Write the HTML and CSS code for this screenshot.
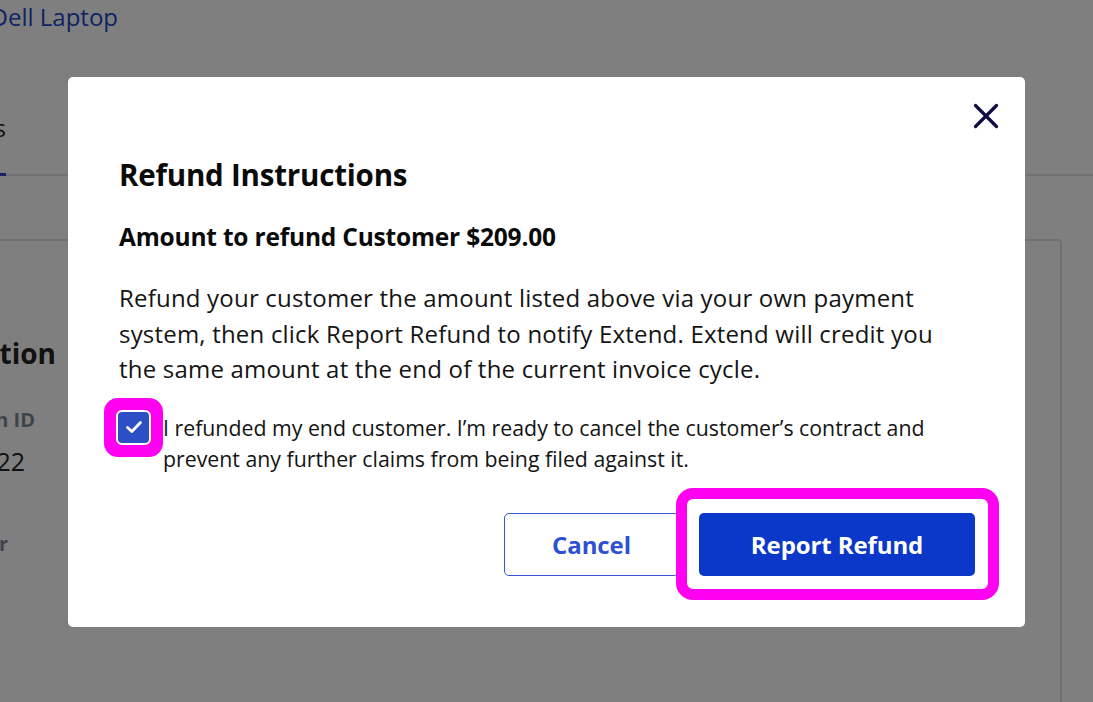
FILE: index.html
```html
<!DOCTYPE html>
<html>
<head>
<meta charset="utf-8">
<link rel="stylesheet" href="styles.css">
</head>
<body>
<div class="page">
  <div class="product"><span>Dell Laptop</span></div>
  <div class="tabs">
    <div class="tab active"><span>Details</span></div>
  </div>
  <div class="card">
    <div class="card-title"><span>Contract Information</span></div>
    <div class="field-label"><span>Transaction ID</span></div>
    <div class="field-value"><span>1022</span></div>
    <div class="field-label second"><span>Customer</span></div>
  </div>
</div>

<div class="overlay">
  <div class="modal">
    <div class="modal-top">
      <button class="close" aria-label="Close">
        <svg width="26" height="26" viewBox="0 0 26 26"><path d="M2.5 2.5 L23.5 23.5 M23.5 2.5 L2.5 23.5" stroke="#0c0a3e" stroke-width="3.2" stroke-linecap="round"/></svg>
      </button>
    </div>
    <h1 class="title">Refund Instructions</h1>
    <h2 class="amount">Amount to refund Customer $209.00</h2>
    <p class="body">Refund your customer the amount listed above via your own payment system, then click Report Refund to notify Extend. Extend will credit you the same amount at the end of the current invoice cycle.</p>
    <label class="check-row">
      <span class="highlight-check">
        <span class="checkbox">
          <svg width="18" height="14" viewBox="0 0 18 14"><path d="M2.5 7.5 L6.8 11.5 L15.5 2.5" fill="none" stroke="#fff" stroke-width="2.8" stroke-linecap="round" stroke-linejoin="round"/></svg>
        </span>
      </span>
      <span class="check-text">I refunded my end customer. I’m ready to cancel the customer’s contract and prevent any further claims from being filed against it.</span>
    </label>
    <div class="actions">
      <button class="btn cancel">Cancel</button>
      <div class="primary-wrap">
        <button class="btn primary">Report Refund</button>
        <span class="highlight-ring"></span>
      </div>
    </div>
  </div>
</div>
</body>
</html>
```
FILE: styles.css
```css
* { box-sizing: border-box; }
html, body { margin: 0; padding: 0; }
body {
  width: 1093px;
  height: 702px;
  overflow: hidden;
  background: #fff;
  font-family: "Open Sans", "Noto Sans", sans-serif;
  position: relative;
}
.page {
  height: 702px;
  overflow: hidden;
}
.product, .tab, .card-title, .field-label, .field-value {
  display: flex;
  justify-content: flex-end;
  white-space: nowrap;
}
.product {
  width: 118px;
  font-size: 24px;
  line-height: 34px;
  color: #2246c8;
  height: 70px;
}
.tabs {
  border-bottom: 2px solid #dfe2e8;
  height: 106px;
  display: flex;
  align-items: flex-end;
}
.tab {
  width: 6px;
  font-size: 24px;
  color: #222;
  line-height: 34px;
  padding-bottom: 28px;
  border-bottom: 3px solid #2246c8;
  margin-bottom: -2px;
}
.card {
  margin-top: 63px;
  margin-left: -20px;
  width: 1082px;
  height: 480px;
  border: 2px solid #dfe2e8;
  border-radius: 4px;
  padding-top: 94px;
}
.card-title {
  width: 74px;
  font-size: 28px;
  font-weight: 700;
  line-height: 36px;
  color: #222;
}
.field-label {
  width: 53px;
  font-size: 20px;
  font-weight: 700;
  color: #7e8796;
  line-height: 28px;
  margin-top: 35px;
}
.field-value {
  width: 43px;
  font-size: 25px;
  line-height: 34px;
  color: #222;
  margin-top: 10px;
}
.field-label.second { width: 26px; margin-top: 52px; }

.overlay {
  position: absolute;
  inset: 0;
  background: rgba(0,0,0,0.5);
}
.modal {
  position: absolute;
  left: 68px;
  top: 77px;
  width: 957px;
  height: 550px;
  background: #fff;
  border-radius: 5px;
  padding: 26px 26px 0 51px;
  display: flex;
  flex-direction: column;
}
.modal-top {
  display: flex;
  justify-content: flex-end;
}
.close {
  border: 0;
  background: none;
  padding: 0;
  width: 26px;
  height: 26px;
  display: flex;
  cursor: pointer;
}
.title {
  margin: 26px 0 0 0;
  font-size: 29.5px;
  font-weight: 700;
  color: #0a0a0a;
  line-height: 40px;
  letter-spacing: -0.2px;
}
.amount {
  margin: 27px 0 0 0;
  font-size: 24.5px;
  font-weight: 700;
  color: #0a0a0a;
  line-height: 30px;
  letter-spacing: -0.2px;
}
.body {
  margin: 28px 0 0 0;
  font-size: 24px;
  letter-spacing: 0.2px;
  line-height: 35.5px;
  color: #141414;
  padding-right: 35px;
}
.check-row {
  display: flex;
  align-items: flex-start;
  margin: 11px 0 0 -15px;
}
.highlight-check {
  background: #ff00f0;
  border-radius: 14px;
  padding: 12px;
  flex: none;
}
.checkbox {
  width: 35px;
  height: 35px;
  display: flex;
  align-items: center;
  justify-content: center;
  background: #2d4fc6;
  border: 2.5px solid #fff;
  border-radius: 6px;
}
.check-text {
  font-size: 21.3px;
  line-height: 31px;
  color: #141414;
  padding-top: 14px;
  padding-right: 20px;
}
.actions {
  margin-top: auto;
  margin-bottom: 51px;
  margin-right: 24px;
  display: flex;
  justify-content: flex-end;
  gap: 20px;
}
.btn {
  height: 63px;
  border-radius: 5px;
  font-family: inherit;
  font-size: 24px;
  font-weight: 700;
  cursor: pointer;
  letter-spacing: -0.1px;
}
.cancel {
  width: 175px;
  background: #fff;
  border: 1.5px solid #3557d6;
  color: #2e50d4;
}
.primary-wrap {
  position: relative;
  display: flex;
}
.primary {
  width: 276px;
  background: #0b38c8;
  border: 0;
  color: #fff;
}
.highlight-ring {
  position: absolute;
  left: -23px;
  top: -25px;
  right: -24px;
  bottom: -24px;
  border: 11px solid #ff00f0;
  border-radius: 17px;
  pointer-events: none;
}
```
